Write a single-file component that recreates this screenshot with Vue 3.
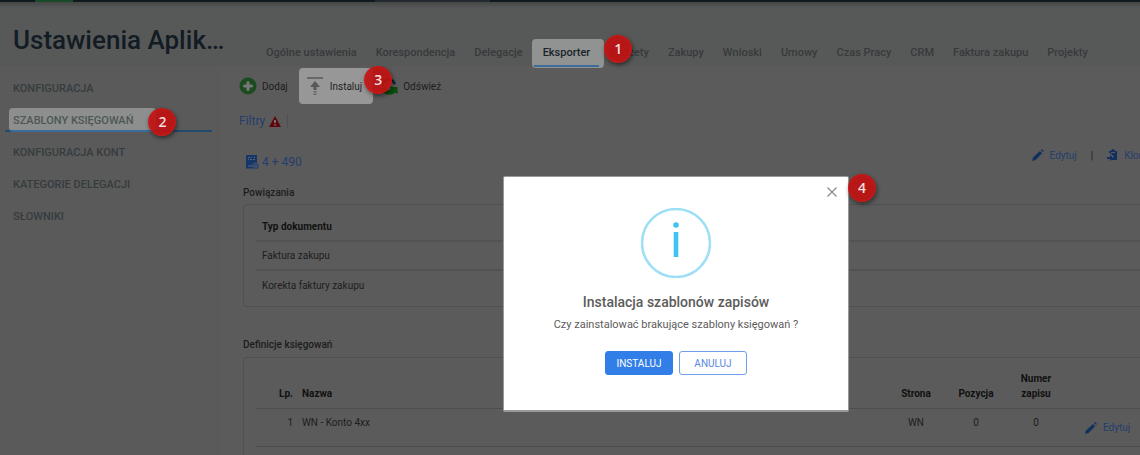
<script setup>
import { ref } from "vue"

const activeTab = ref("Eksporter")
const activeSection = ref("Szablony księgowań")
const showModal = ref(true)

const tabs = [
  "Ogólne ustawienia",
  "Korespondencja",
  "Delegacje",
  "Eksporter",
  "Budżety",
  "Zakupy",
  "Wnioski",
  "Umowy",
  "Czas Pracy",
  "CRM",
  "Faktura zakupu",
  "Projekty",
]

const sections = [
  "Konfiguracja",
  "Szablony księgowań",
  "Konfiguracja kont",
  "Kategorie delegacji",
  "Słowniki",
]

const documents = ["Faktura zakupu", "Korekta faktury zakupu"]

const entries = ref([
  { id: 1, name: "WN - Konto 4xx", side: "WN", position: 0, number: 0 },
])

const closeModal = () => {
  showModal.value = false
}
</script>

<template>
  <div class="page">
    <div class="topbar">
      <span class="topbar-green"></span>
      <span class="topbar-grey"></span>
    </div>

    <header class="header">
      <h1 class="title">Ustawienia Aplikacji</h1>
      <nav class="tabs">
        <a
          v-for="tab in tabs"
          :key="tab"
          href="#"
          class="tab"
          :class="{ active: tab === activeTab }"
          @click.prevent="activeTab = tab"
        >
          {{ tab }}
          <span v-if="tab === activeTab" class="step step-tab">1</span>
        </a>
      </nav>
    </header>

    <div class="body">
      <nav class="sidebar">
        <a
          v-for="section in sections"
          :key="section"
          href="#"
          class="section"
          :class="{ active: section === activeSection }"
          @click.prevent="activeSection = section"
        >
          <span class="section-label">
            {{ section }}
            <span v-if="section === activeSection" class="step step-section">2</span>
          </span>
        </a>
      </nav>

      <main class="main">
        <div class="toolbar">
          <button class="tool">
            <svg width="18" height="18" viewBox="0 0 18 18">
              <circle cx="9" cy="9" r="8.5" fill="#1d4b20" />
              <path d="M9 5.500v7M5.500 9h7" stroke="#777" stroke-width="3" stroke-linecap="round" />
            </svg>
            Dodaj
          </button>
          <button class="tool install" @click="showModal = true">
            <svg width="18" height="20" viewBox="0 0 18 20">
              <path d="M1 2h16" stroke="#686868" stroke-width="2" />
              <path d="M9 5l5 6h-3.500v3h-3v-3H4z" fill="#585858" />
              <path d="M7.500 15h3v1.500h-3zM7.500 17.500h3V19h-3z" fill="#686868" />
            </svg>
            Instaluj
            <span class="step step-tool">3</span>
          </button>
          <button class="tool refresh">
            <svg width="18" height="18" viewBox="0 0 18 18">
              <path d="M2 8a7 7 0 0 1 11-4l2 3" fill="none" stroke="#14233f" stroke-width="2.500" />
              <path d="M1 11l6 0-1 2c2 1 4 0 5-1l-2-2h8.500v7l-2.500-1.500C11 19 3 19 1 11z" fill="#084d0d" />
            </svg>
            Odśwież
          </button>
        </div>

        <div class="filters">
          <a href="#" class="filter-link">Filtry</a>
          <svg width="12" height="11" viewBox="0 0 12 11">
            <path d="M6 0l6 11H0z" fill="#5f0710" />
            <path d="M6 4v3M6 8.200v1.300" stroke="#8a8a8a" stroke-width="1.500" />
          </svg>
          <span class="filter-divider"></span>
        </div>

        <div class="wide">
          <div class="template-bar">
            <div class="template-name">
              <svg width="13" height="14" viewBox="0 0 13 14">
                <path d="M0 0h11v8a3 3 0 0 0-3 5.500H0z" fill="#163668" />
                <path
                  d="M2 2h2v1H2zM5 2h1v1H5zM8 2h1v1H8zM2 4h1v1H2zM4 4h2v1H4zM7 4h2v1H7zM2 10.500h4v1H2z"
                  fill="#596575"
                />
                <circle cx="10" cy="11" r="2.300" fill="#40506a" stroke="#2a4674" stroke-width="1.200" />
              </svg>
              4 + 490
            </div>
            <div class="template-actions">
              <button class="action">
                <svg width="12" height="12" viewBox="0 0 12 12">
                  <path d="M0 12l1-3.500L8 2l2.200 2.200L3.500 11zM9 1l1-1 2 2-1 1z" fill="#132f60" />
                </svg>
                Edytuj
              </button>
              <span class="pipe">|</span>
              <button class="action">
                <svg width="11" height="12" viewBox="0 0 11 12">
                  <path d="M2 2h2c0-2.500 4-2.500 4 0h2v9H4l3-3.500L3 4H2z" fill="#132f60" />
                  <path d="M6 11l4-3v3z" fill="#132f60" />
                  <path d="M4 3.500h4" stroke="#5b5b5b" />
                  <path d="M0 8h3V5.500L6 9l-3 3v-2H0z" fill="#132f60" />
                </svg>
                Klonuj
              </button>
            </div>
          </div>

          <h2 class="heading">Powiązania</h2>
          <div class="card">
            <table class="table documents">
              <thead>
                <tr>
                  <th>Typ dokumentu</th>
                </tr>
              </thead>
              <tbody>
                <tr v-for="doc in documents" :key="doc">
                  <td>{{ doc }}</td>
                </tr>
              </tbody>
            </table>
          </div>

          <h2 class="heading heading-entries">Definicje księgowań</h2>
          <div class="card card-entries">
            <table class="table entries">
              <thead>
                <tr>
                  <th class="col-no">Lp.</th>
                  <th>Nazwa</th>
                  <th class="col-num">Strona</th>
                  <th class="col-num">Pozycja</th>
                  <th class="col-num">Numer zapisu</th>
                  <th class="col-action"></th>
                </tr>
              </thead>
              <tbody>
                <tr v-for="entry in entries" :key="entry.id">
                  <td class="col-no">{{ entry.id }}</td>
                  <td>{{ entry.name }}</td>
                  <td class="col-num">{{ entry.side }}</td>
                  <td class="col-num">{{ entry.position }}</td>
                  <td class="col-num">{{ entry.number }}</td>
                  <td class="col-action">
                    <button class="action">
                      <svg width="12" height="12" viewBox="0 0 12 12">
                        <path d="M0 12l1-3.500L8 2l2.200 2.200L3.500 11zM9 1l1-1 2 2-1 1z" fill="#132f60" />
                      </svg>
                      Edytuj
                    </button>
                  </td>
                </tr>
              </tbody>
            </table>
          </div>
        </div>

        <div v-if="showModal" class="overlay">
          <div class="modal" role="dialog" aria-labelledby="modal-title">
            <button class="close" aria-label="Zamknij" @click="closeModal()">
              <svg width="10" height="10" viewBox="0 0 10 10">
                <path d="M.5.5l9 9M9.500.5l-9 9" stroke="#8c8c8c" stroke-width="1.300" />
              </svg>
            </button>
            <svg width="70" height="70" viewBox="0 0 70 70">
              <circle cx="35" cy="35" r="34" fill="none" stroke="#9de0f6" stroke-width="2.500" />
              <circle cx="35" cy="17" r="2.800" fill="#3fc3ee" />
              <path d="M35 24v25" stroke="#3fc3ee" stroke-width="4.600" />
            </svg>
            <h2 id="modal-title" class="modal-title">Instalacja szablonów zapisów</h2>
            <p class="modal-text">Czy zainstalować brakujące szablony księgowań ?</p>
            <div class="modal-buttons">
              <button class="button primary" @click="closeModal()">INSTALUJ</button>
              <button class="button" @click="closeModal()">ANULUJ</button>
            </div>
            <span class="step step-modal">4</span>
          </div>
        </div>
      </main>
    </div>
  </div>
</template>

<style>
body {
  background: #5b5b5b;
}
</style>

<style scoped>
.page {
  display: flex;
  flex-direction: column;
  height: 100vh;
  overflow: hidden;
  font-family: Roboto, "Liberation Sans", sans-serif;
  font-size: 10px;
  line-height: 15px;
  color: #1d1d1d;
}

a {
  text-decoration: none;
}

button {
  padding: 0;
  border: none;
  background: none;
  font: inherit;
  color: inherit;
  cursor: pointer;
}

.topbar {
  display: flex;
  flex: none;
  height: 2px;
  background: #101820;
}

.topbar-green {
  width: 38px;
  margin-left: 35px;
  background: #1b4a29;
}

.topbar-grey {
  width: 115px;
  margin-left: 302px;
  background: #242a30;
}

.header {
  display: flex;
  flex: none;
  align-items: flex-start;
  height: 64px;
  background: linear-gradient(#444746, #575958 6px);
}

.title {
  flex: none;
  box-sizing: border-box;
  width: 228px;
  margin: 21px 0 0;
  padding-left: 13px;
  font-size: 26px;
  font-weight: 500;
  line-height: 34px;
  color: #131b24;
  white-space: nowrap;
  overflow: hidden;
  text-overflow: ellipsis;
}

.tabs {
  display: flex;
  margin: 37px 0 0 28px;
}

.tab {
  position: relative;
  padding: 6px 9px 7px 10px;
  font-size: 11px;
  font-weight: 500;
  line-height: 16px;
  color: #363a3c;
  white-space: nowrap;
}

.tab.active {
  z-index: 2;
  margin-right: -5px;
  padding: 6px 14px 7px 11px;
  border-radius: 4px;
  background: #909392;
  color: #1b232a;
}

.tab.active::after {
  content: "";
  position: absolute;
  left: 2px;
  right: 5px;
  bottom: 1px;
  height: 2px;
  background: #3c6d99;
}

.step {
  position: absolute;
  width: 28px;
  height: 28px;
  border-radius: 50%;
  background: radial-gradient(#c01010e8 55%, #e81010e8);
  box-shadow: 1px 2px 4px #00000080;
  font-family: "Open Sans", Roboto, sans-serif;
  font-size: 14px;
  font-weight: 600;
  line-height: 27px;
  text-align: center;
  color: #f3dede;
}

.step-tab {
  top: -4px;
  right: -28px;
}

.body {
  display: flex;
  flex: 1;
  min-height: 0;
}

.sidebar {
  flex: none;
  box-sizing: border-box;
  width: 220px;
  padding: 2px 8px 0 5px;
  background: #5a5a5a;
}

.section {
  display: flex;
  height: 30px;
  border-bottom: 2px solid transparent;
  font-size: 11px;
  font-weight: 500;
  line-height: 16px;
  color: #363b3e;
  text-transform: uppercase;
}

.section.active {
  border-bottom-color: #224a6d;
  color: #4d5656;
}

.section-label {
  position: relative;
  padding: 13px 4px 0 8px;
}

.section.active .section-label {
  margin: 8px 0 -2px 4px;
  padding: 5px 23px 0 4px;
  border-bottom: 2px solid #3c6d99;
  border-radius: 4px;
  background: #8d8f8e;
}

.step-section {
  top: 0;
  right: -20px;
}

.main {
  position: relative;
  flex: 1;
  min-width: 0;
  padding-left: 19px;
  overflow: hidden;
}

.toolbar {
  display: flex;
  align-items: center;
  height: 40px;
}

.tool {
  display: flex;
  align-items: center;
  gap: 5px;
  height: 36px;
}

.install {
  position: relative;
  z-index: 1;
  gap: 6px;
  margin-left: 11px;
  padding: 0 11px 0 7px;
  border-radius: 4px;
  background: #979797;
}

.refresh {
  margin-left: 7px;
}

.step-tool {
  top: -2px;
  right: -19px;
}

.filters {
  display: flex;
  align-items: center;
  gap: 4px;
  height: 30px;
  font-size: 12px;
}

.filter-link {
  color: #253e6d;
}

.filter-divider {
  width: 1px;
  height: 14px;
  margin-left: 2px;
  background: #505050;
}

/* content is wider than the pane and gets clipped on the right */
.wide {
  margin-right: -40px;
  padding-left: 4px;
}

.template-bar {
  display: flex;
  align-items: center;
  justify-content: space-between;
  margin-top: 4px;
  height: 30px;
}

.template-name {
  display: flex;
  align-items: center;
  gap: 3px;
  padding: 14px 0 0 3px;
  font-size: 12px;
  color: #253e6d;
}

.template-actions {
  display: flex;
  align-items: center;
  padding-right: 28px;
}

.action {
  display: flex;
  align-items: center;
  gap: 6px;
  color: #253e6d;
}

.pipe {
  margin: 0 14px;
}

.heading {
  margin: 15px 0 4px;
  font-size: 10px;
  font-weight: 500;
  line-height: 15px;
}

.heading-entries {
  margin-top: 30px;
  margin-bottom: 5px;
}

.card {
  padding: 7px 12px;
  border: 1px solid #505050;
  border-radius: 4px;
}

.card-entries {
  padding: 13px 12px;
}

.table {
  width: 100%;
  border-collapse: collapse;
}

.table th,
.table td {
  box-sizing: border-box;
  height: 29px;
  padding: 0 6px;
  text-align: left;
}

.table th {
  font-weight: 700;
  color: #111;
}

.documents tr {
  border-bottom: 2px solid #525252;
}

.documents tr:last-child {
  border-bottom: none;
}

.documents thead tr:last-child {
  border-bottom: 2px solid #525252;
}

.entries tr {
  border-bottom: 1px solid #4e4e4e;
}

.entries th {
  height: 37px;
  padding-bottom: 7px;
  vertical-align: bottom;
}

.entries td {
  height: 38px;
  padding-top: 6px;
  vertical-align: top;
}

.table .col-no {
  width: 40px;
  padding-right: 3px;
  text-align: right;
}

.table .col-num {
  width: 60px;
  text-align: center;
}

.table .col-action {
  width: 101px;
  padding-top: 11px;
  padding-left: 19px;
}

.overlay {
  position: absolute;
  inset: 0 8px 0 0;
  display: flex;
  align-items: flex-start;
  justify-content: center;
  padding-top: 110px;
}

.modal {
  position: relative;
  display: flex;
  flex-direction: column;
  align-items: center;
  box-sizing: border-box;
  width: 346px;
  padding: 31px 20px 35px;
  border: 1px solid #999;
  border-bottom-width: 2px;
  border-radius: 2px;
  background: #fff;
  color: #5c5c5c;
}

.close {
  position: absolute;
  top: 10px;
  right: 11px;
  display: flex;
}

.modal-title {
  margin: 15px 0 6px;
  font-size: 14px;
  font-weight: 500;
  line-height: 18px;
}

.modal-text {
  margin: 0;
  font-size: 11px;
  line-height: 16px;
}

.modal-buttons {
  display: flex;
  gap: 6px;
  margin-top: 18px;
}

.button {
  width: 68px;
  height: 24px;
  border: 1px solid #6f9fec;
  border-radius: 3px;
  color: #5a88e0;
}

.button.primary {
  border-color: #327ee8;
  background: #327ee8;
  color: #fff;
}

.step-modal {
  top: -3px;
  right: -28px;
}
</style>
